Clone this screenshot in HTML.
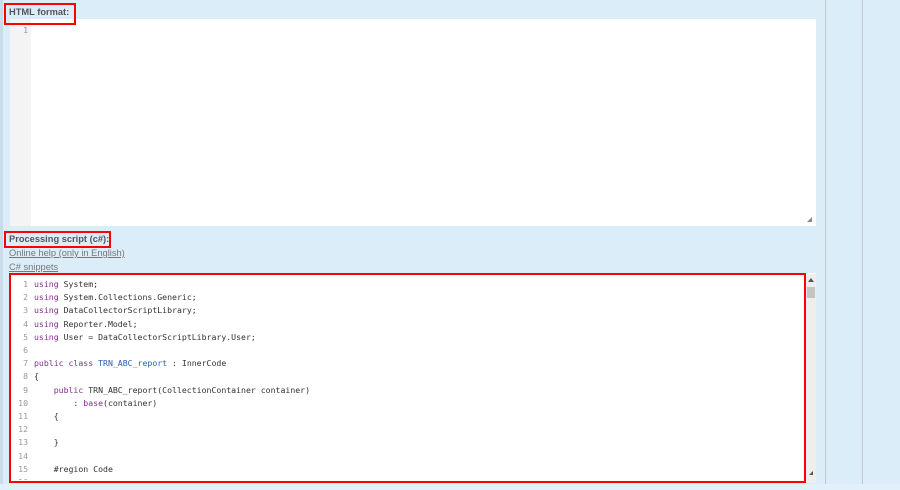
<!DOCTYPE html>
<html><head><meta charset="utf-8"><style>
*{margin:0;padding:0;box-sizing:border-box}
body{width:900px;height:490px;background:#dbedf8;position:relative;overflow:hidden;font-family:"Liberation Sans",sans-serif}
.abs{position:absolute}
.lbl{font-size:9.3px;font-weight:bold;color:#555}
.red{border:2px solid #f00;z-index:5}
.lnk{font-size:9.3px;color:#777;text-decoration:underline}
.code{font-family:"DejaVu Sans Mono","Liberation Mono",monospace;font-size:8.2px;color:#333;line-height:13.2px;white-space:pre}
.g{color:#999;text-align:right;width:18px;display:inline-block;margin-right:6px}
.k{color:#80318b}.t{color:#2a5db0}
</style></head><body>
<div class="abs" style="left:0;top:0;width:3px;height:490px;background:#c9dcea"></div>
<div class="abs" style="left:825px;top:0;width:1px;height:484px;background:#c4c9cc"></div>
<div class="abs" style="left:862px;top:0;width:1px;height:484px;background:#c4c9cc"></div>
<div class="abs" style="left:0;top:484px;width:900px;height:6px;background:#e2f0f9"></div>

<div class="abs lbl" style="left:9px;top:7px">HTML format:</div>
<div class="abs" style="left:10px;top:19px;width:806px;height:207px;background:#fff"></div>
<div class="abs" style="left:10px;top:19px;width:21px;height:207px;background:#f4f4f4"></div>
<div class="abs code" style="left:10px;top:24px"><span class="g">1</span></div>
<div class="abs" style="left:807px;top:217px;width:0;height:0;border-left:5px solid transparent;border-bottom:5px solid #888"></div>
<div class="abs red" style="left:4px;top:3px;width:72px;height:22px"></div>

<div class="abs red" style="left:4px;top:231px;width:107px;height:17px"></div>
<div class="abs lbl" style="left:9px;top:234px">Processing script (c#):</div>
<div class="abs lnk" style="left:9px;top:248px">Online help (only in English)</div>
<div class="abs lnk" style="left:9px;top:262px">C# snippets</div>

<div class="abs" style="left:10px;top:273px;width:806px;height:210px;background:#fff"></div>
<div class="abs" style="left:806px;top:274px;width:10px;height:209px;background:#eee"></div>
<div class="abs" style="left:807px;top:287px;width:8px;height:11px;background:#c3c3c3"></div>
<div class="abs" style="left:808px;top:278px;width:0;height:0;border-left:3px solid transparent;border-right:3px solid transparent;border-bottom:4px solid #555"></div>
<div class="abs" style="left:809px;top:471px;width:0;height:0;border-left:4px solid transparent;border-bottom:4px solid #555"></div>
<div class="abs red" style="left:9px;top:273px;width:797px;height:210px"></div>
<div class="abs code" style="left:10px;top:278px;height:202px;overflow:hidden"><span class="g">1</span><span class="k">using</span> System;
<span class="g">2</span><span class="k">using</span> System.Collections.Generic;
<span class="g">3</span><span class="k">using</span> DataCollectorScriptLibrary;
<span class="g">4</span><span class="k">using</span> Reporter.Model;
<span class="g">5</span><span class="k">using</span> User = DataCollectorScriptLibrary.User;
<span class="g">6</span>
<span class="g">7</span><span class="k">public class</span> <span class="t">TRN_ABC_report</span> : InnerCode
<span class="g">8</span>{
<span class="g">9</span>    <span class="k">public</span> TRN_ABC_report(CollectionContainer container)
<span class="g">10</span>        : <span class="k">base</span>(container)
<span class="g">11</span>    {
<span class="g">12</span>
<span class="g">13</span>    }
<span class="g">14</span>
<span class="g">15</span>    #region Code
<span class="g">16</span></div>
</body></html>
